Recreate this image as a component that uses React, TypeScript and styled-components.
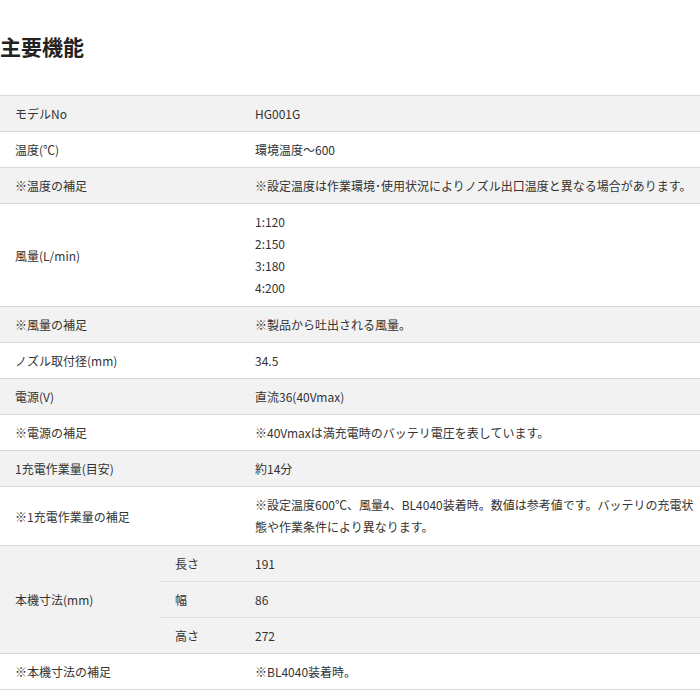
import React from "react";
import styled, { createGlobalStyle } from "styled-components";

const Global = createGlobalStyle`
  body { margin: 0; background: #fff; font-family: "Noto Sans CJK JP", "Noto Sans", sans-serif; color: #333; }
`;
const Page = styled.div`width: 700px; overflow: hidden;`;
const Title = styled.h2`margin: 0; padding: 31px 0 0 0; height: 64px; box-sizing: border-box; font-size: 21px; font-weight: 700; color: #222; line-height: 30px;`;
const Table = styled.table`
  border-collapse: collapse; table-layout: fixed; width: 760px; margin-top: 31px; font-size: 12px; line-height: 21px;
  border-top: 1px solid #d9d9d9;
`;
const Row = styled.tr<{ $grey: boolean }>`
  background: ${p => (p.$grey ? "#f2f2f2" : "#fff")};
  border-bottom: 1px solid #d9d9d9;
`;
const SubRow = styled.tr<{ $last?: boolean }>`
  background: #f2f2f2;
  border-bottom: 1px solid ${p => (p.$last ? "#d9d9d9" : "#e0e0e0")};
`;
const Label = styled.td`padding: 7px 15px; vertical-align: middle; white-space: nowrap;`;
const Sub = styled.td`padding: 7px 0 7px 15px;`;
const Val = styled.td`padding: 7px 15px; white-space: nowrap;`;
const Lines = styled.div<{ $w?: number }>`
  line-height: 22px; padding: 0; white-space: normal;
  width: ${p => (p.$w ? p.$w + "px" : "auto")};
`;

const rows: [string, React.ReactNode][] = [
  ["モデルNo", "HG001G"],
  ["温度(℃)", "環境温度〜600"],
  ["※温度の補足", "※設定温度は作業環境･使用状況によりノズル出口温度と異なる場合があります。"],
  ["風量(L/min)", <Lines>1:120<br />2:150<br />3:180<br />4:200</Lines>],
  ["※風量の補足", "※製品から吐出される風量。"],
  ["ノズル取付径(mm)", "34.5"],
  ["電源(V)", "直流36(40Vmax)"],
  ["※電源の補足", "※40Vmaxは満充電時のバッテリ電圧を表しています。"],
  ["1充電作業量(目安)", "約14分"],
  ["※1充電作業量の補足", <Lines $w={440}>※設定温度600℃、風量4、BL4040装着時。数値は参考値です。バッテリの充電状態や作業条件により異なります。</Lines>],
];

export default function App() {
  return (
    <Page>
      <Global />
      <Title>主要機能</Title>
      <Table>
        <colgroup>
          <col style={{ width: 160 }} />
          <col style={{ width: 80 }} />
          <col />
        </colgroup>
        <tbody>
          {rows.map(([l, v], i) => (
            <Row key={i} $grey={i % 2 === 0}>
              <Label colSpan={2}>{l}</Label>
              <Val>{v}</Val>
            </Row>
          ))}
          <SubRow>
            <Label rowSpan={3}>本機寸法(mm)</Label>
            <Sub>長さ</Sub><Val>191</Val>
          </SubRow>
          <SubRow><Sub>幅</Sub><Val>86</Val></SubRow>
          <SubRow $last><Sub>高さ</Sub><Val>272</Val></SubRow>
          <Row $grey={false}>
            <Label colSpan={2}>※本機寸法の補足</Label>
            <Val>※BL4040装着時。</Val>
          </Row>
        </tbody>
      </Table>
    </Page>
  );
}
